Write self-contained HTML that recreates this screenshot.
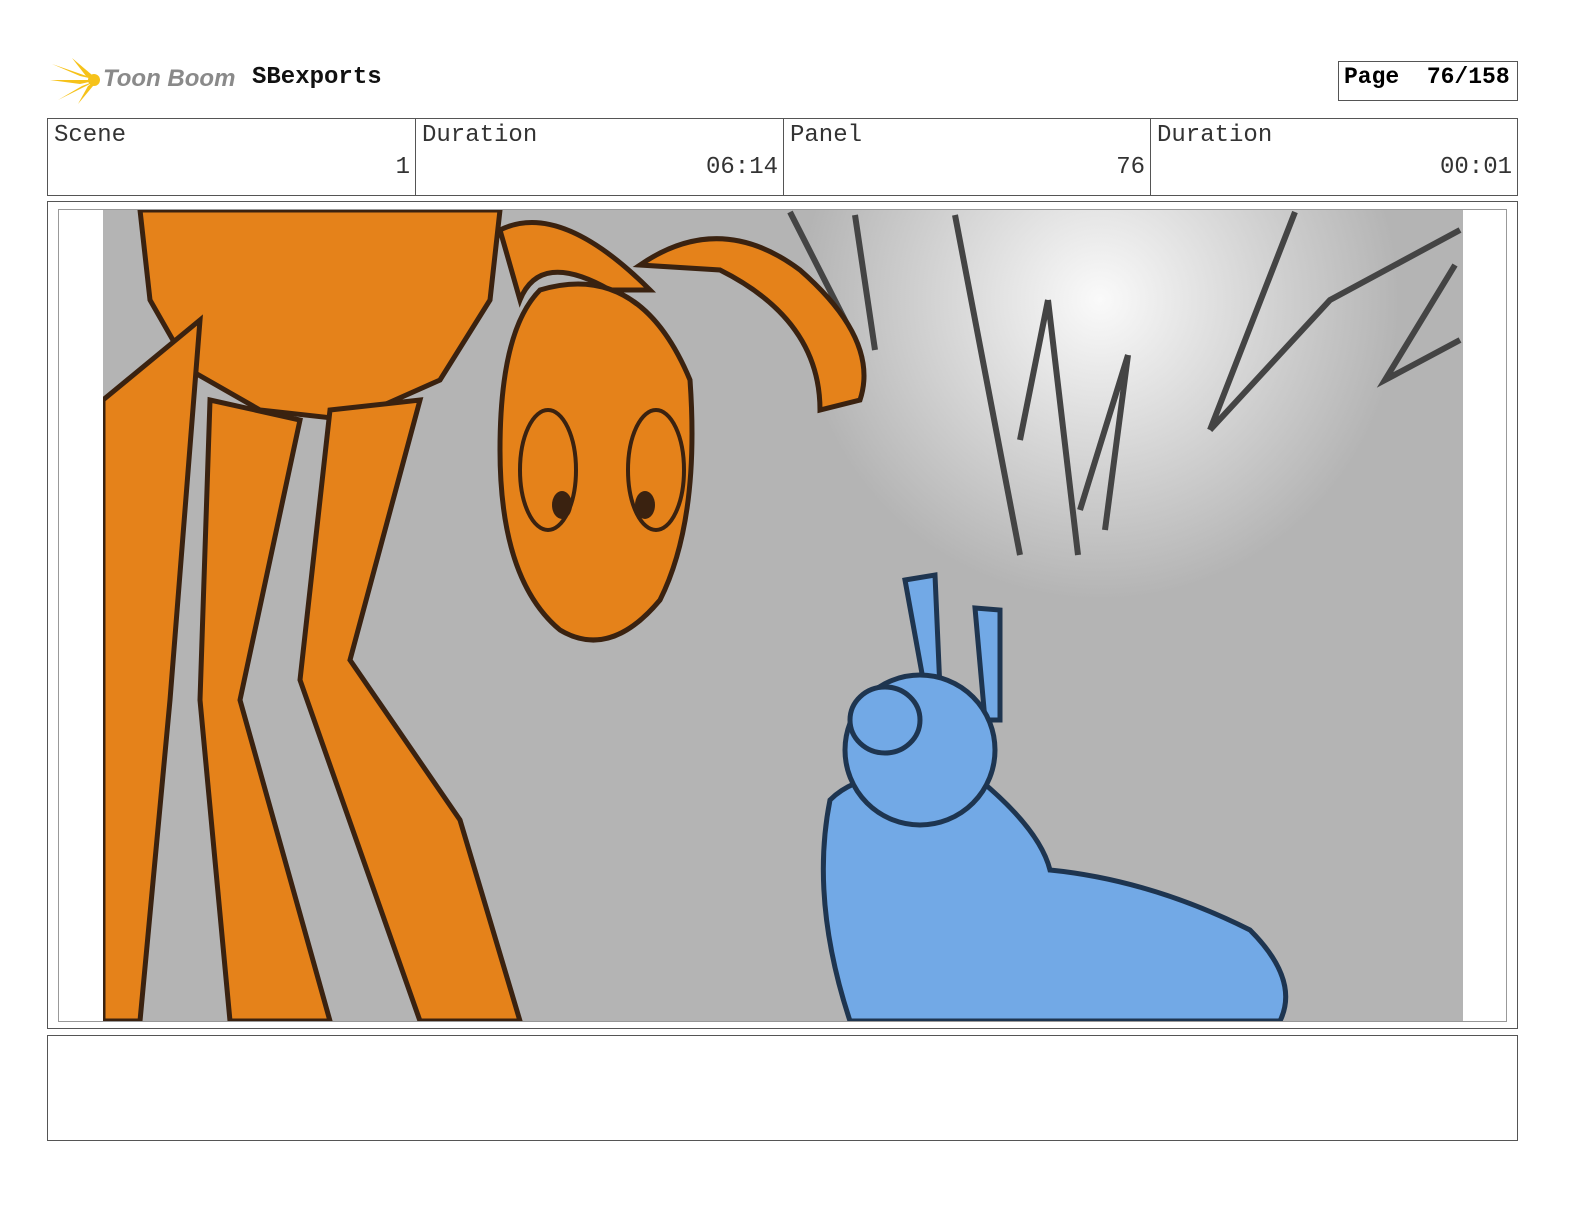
<!DOCTYPE html>
<html><head><meta charset="utf-8"><style>
body{margin:0;width:1584px;height:1224px;background:#fff;position:relative;overflow:hidden;font-family:"Liberation Mono",monospace;}
.a{position:absolute}
.cell{position:absolute;top:118px;height:78px;border:1px solid #555;box-sizing:border-box;font-size:24px;color:#333}
.cell .l{position:absolute;left:6px;top:3px}
.cell .v{position:absolute;right:5px;top:35px}
</style></head><body>
<svg class="a" style="left:50px;top:56px" width="60" height="50" viewBox="0 0 60 50">
<g fill="#f6c21a"><path d="M48 24 L2 8 L30 20Z"/><path d="M48 24 L0 24 L30 28Z"/><path d="M48 24 L8 44 L32 30Z"/><path d="M48 24 L22 2 L36 20Z"/><path d="M48 24 L28 48 L38 30Z"/><circle cx="44" cy="24" r="6"/></g></svg>
<div class="a" style="left:103px;top:65px;font-family:'Liberation Sans',sans-serif;font-style:italic;font-weight:bold;font-size:24px;color:#8a8a8a">Toon Boom</div>
<div class="a" style="left:252px;top:64px;font-weight:bold;font-size:24px;color:#111">SBexports</div>
<div class="a" style="left:1338px;top:61px;width:180px;height:40px;border:1px solid #555;box-sizing:border-box;font-weight:bold;font-size:23px;padding:2px 0 0 5px;white-space:pre">Page  76/158</div>
<div class="cell" style="left:47px;width:369px"><span class="l">Scene</span><span class="v">1</span></div>
<div class="cell" style="left:415px;width:369px"><span class="l">Duration</span><span class="v">06:14</span></div>
<div class="cell" style="left:783px;width:368px"><span class="l">Panel</span><span class="v">76</span></div>
<div class="cell" style="left:1150px;width:368px"><span class="l">Duration</span><span class="v">00:01</span></div>
<div class="a" style="left:47px;top:201px;width:1471px;height:828px;border:1px solid #555;box-sizing:border-box"></div>
<div class="a" style="left:58px;top:209px;width:1449px;height:813px;border:1px solid #999;box-sizing:border-box"></div>
<svg class="a" style="left:103px;top:210px" width="1360" height="811" viewBox="103 210 1360 811">
<defs><radialGradient id="g" cx="1100" cy="300" r="300" gradientUnits="userSpaceOnUse"><stop offset="0" stop-color="#fafafa"/><stop offset="1" stop-color="#b4b4b4"/></radialGradient></defs>
<rect x="103" y="210" width="1360" height="811" fill="#b4b4b4"/>
<rect x="780" y="210" width="683" height="400" fill="url(#g)"/>
<g fill="none" stroke="#444" stroke-width="6">
<path d="M955 215 L1020 555 M1048 300 L1020 440 M1048 300 L1078 555 M1128 355 L1080 510 M1128 355 L1105 530 M1295 212 L1210 430 M1460 230 L1330 300 L1210 430 M1455 265 L1385 380 L1460 340 M790 212 L850 330 M855 215 L875 350"/></g>
<g fill="#e5821a" stroke="#3a2210" stroke-width="5">
<path d="M140 210 L500 210 L490 300 L440 380 L350 420 L260 410 L190 370 L150 300Z"/>
<path d="M103 400 L200 320 L170 700 L140 1021 L103 1021Z"/>
<path d="M210 400 L300 420 L240 700 L330 1021 L230 1021 L200 700Z"/>
<path d="M330 410 L420 400 L350 660 L460 820 L520 1021 L420 1021 L300 680Z"/>
<path d="M500 230 Q560 200 650 290 L610 290 Q540 250 520 300Z"/>
<path d="M640 265 Q720 210 800 270 Q880 340 860 400 L820 410 Q820 320 720 270Z"/>
<path d="M540 290 Q640 260 690 380 Q700 520 660 600 Q610 660 560 630 Q500 580 500 450 Q500 330 540 290Z"/></g>
<g fill="none" stroke="#3a2210" stroke-width="4"><ellipse cx="548" cy="470" rx="28" ry="60"/><ellipse cx="656" cy="470" rx="28" ry="60"/></g>
<g fill="#3a2210"><ellipse cx="562" cy="505" rx="10" ry="14"/><ellipse cx="645" cy="505" rx="10" ry="14"/></g>
<g fill="#72a9e6" stroke="#1e3550" stroke-width="5">
<path d="M905 580 L935 575 L940 690 L925 690Z"/><path d="M975 608 L1000 610 L1000 720 L985 720Z"/>
<path d="M830 800 Q870 760 980 780 Q1040 830 1050 870 Q1150 880 1250 930 Q1300 980 1280 1021 L850 1021 Q810 900 830 800Z"/>
<circle cx="920" cy="750" r="75"/><ellipse cx="885" cy="720" rx="35" ry="33"/></g>
</svg>
<div class="a" style="left:47px;top:1035px;width:1471px;height:106px;border:1px solid #555;box-sizing:border-box"></div>
</body></html>
